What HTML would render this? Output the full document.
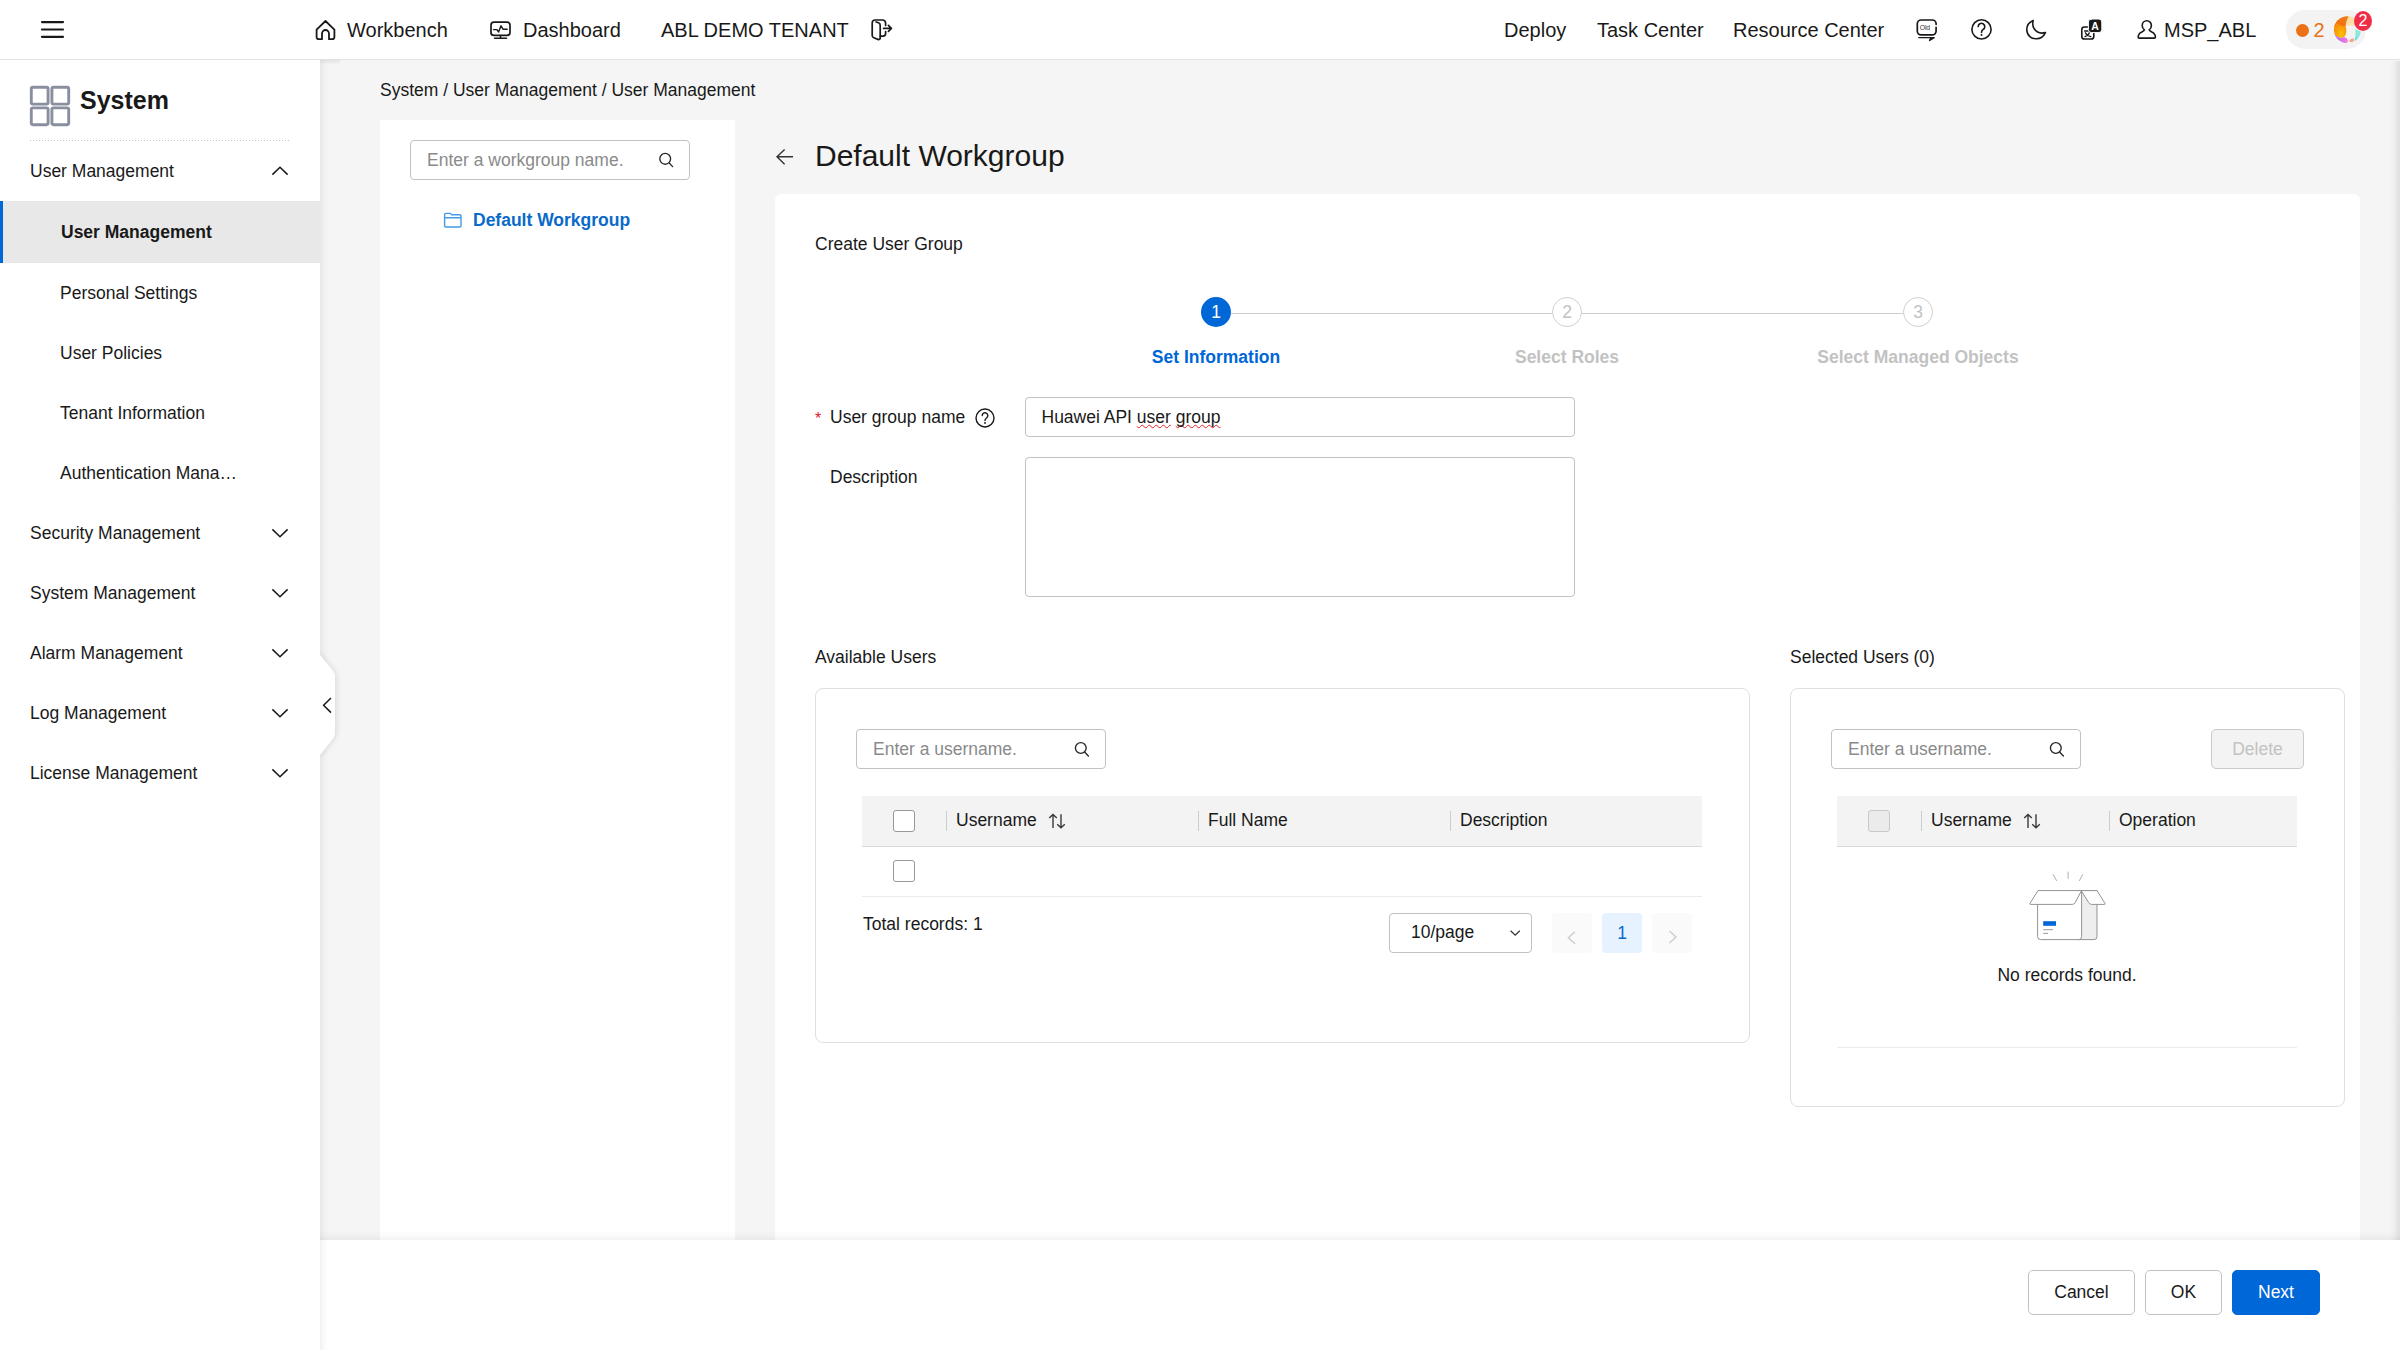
<!DOCTYPE html>
<html lang="en">
<head>
<meta charset="utf-8">
<title>User Management</title>
<style>
*{box-sizing:border-box;margin:0;padding:0}
html,body{width:2400px;height:1350px;overflow:hidden;background:#f5f5f5;}
body{font-family:"Liberation Sans",sans-serif;font-size:17.5px;color:#191919;position:relative;line-height:1;}
.abs{position:absolute}
.t{position:absolute;white-space:nowrap;line-height:1;margin-top:1px}
svg{position:absolute;overflow:visible}
/* header */
#hdr{position:absolute;left:0;top:0;width:2400px;height:60px;background:#fff;border-bottom:1px solid #e2e2e2;z-index:5}
#hdr .t{font-size:20px;top:20px;color:#191919;margin-top:0}
/* sidebar */
#side{position:absolute;left:0;top:60px;width:320px;height:1290px;background:#fff;z-index:3;}
#side .m{margin-top:1px;position:absolute;left:30px;font-size:17.5px;white-space:nowrap}
#side .s{margin-top:1px;position:absolute;left:60px;font-size:17.5px;white-space:nowrap}
.inp{position:absolute;border:1px solid #c2c2c2;border-radius:4px;background:#fff;height:40px}
.ph{position:absolute;left:16px;top:11px;font-size:17.5px;color:#8a8a8a;white-space:nowrap}
.box{position:absolute;border:1px solid #dfdfdf;border-radius:8px;background:#fff}
.th{position:absolute;background:#f3f3f3;height:51px;border-bottom:1px solid #d9d9d9}
.sep{position:absolute;width:1px;height:20px;top:15px;background:#cdcdcd}
.cb{position:absolute;width:22px;height:22px;border:1px solid #999;border-radius:3px;background:#fff}
u.sq{text-decoration:underline wavy #e8202a;text-decoration-thickness:1px;text-underline-offset:0.5px;text-decoration-skip-ink:none}
.btn{position:absolute;height:45px;border:1px solid #c2c2c2;border-radius:5px;background:#fff;font-size:17.5px;text-align:center;line-height:42px;color:#191919}
</style>
</head>
<body>

<!-- ================= HEADER ================= -->
<div id="hdr">
  <svg style="left:40px;top:20px" width="24" height="20" viewBox="0 0 24 20" fill="none" stroke="#191919" stroke-width="2.2" stroke-linecap="round"><path d="M2 2.1H23M2 9.5H23M2 16.8H23"/></svg>
  <span class="t" style="left:347px">Workbench</span>
  <span class="t" style="left:523px">Dashboard</span>
  <span class="t" style="left:661px">ABL DEMO TENANT</span>
  <span class="t" style="left:1504px">Deploy</span>
  <span class="t" style="left:1597px">Task Center</span>
  <span class="t" style="left:1733px">Resource Center</span>
  <span class="t" style="left:2164px">MSP_ABL</span>
  <span class="t" style="left:1919.8px;top:25.1px;font-size:6.8px;color:#333;letter-spacing:-0.15px">Old</span>
  <div class="abs" style="left:2286px;top:10px;width:80px;height:39px;border-radius:20px;background:#f3f3f3"></div>
  <div class="abs" style="left:2296px;top:24px;width:13px;height:13px;border-radius:50%;background:#ec7016"></div>
  <span class="t" style="left:2313.5px;top:20px;color:#ec7016">2</span>
  <svg style="left:2334px;top:15.7px" width="27" height="27.4" viewBox="0 0 27 27.4">
    <defs>
      <clipPath id="lc"><circle cx="13.4" cy="13.7" r="13.5"/></clipPath>
      <radialGradient id="g1" cx="0.62" cy="0.78" r="0.75"><stop offset="0" stop-color="#ffc400"/><stop offset="0.45" stop-color="#fba007"/><stop offset="1" stop-color="#f5830c"/></radialGradient>
      <linearGradient id="g0" x1="0" y1="1" x2="1" y2="0"><stop offset="0" stop-color="#f7650b"/><stop offset="1" stop-color="#e9831f"/></linearGradient>
      <linearGradient id="g2" x1="0" y1="0" x2="0" y2="1"><stop offset="0" stop-color="#ffdc9c"/><stop offset="1" stop-color="#ffe2b0"/></linearGradient>
      <linearGradient id="g3" x1="0" y1="0" x2="1" y2="0.4"><stop offset="0" stop-color="#a35cf2"/><stop offset="1" stop-color="#ea7be2"/></linearGradient>
      <linearGradient id="g4" x1="0" y1="0" x2="0" y2="1"><stop offset="0" stop-color="#86f0cf"/><stop offset="0.5" stop-color="#8ee4df"/><stop offset="1" stop-color="#3fd2f0"/></linearGradient>
    </defs>
    <g clip-path="url(#lc)">
      <path d="M12 -1 H21 V9.8 C18 9.2 14.5 9.4 11.7 10.2 Z" fill="url(#g2)"/>
      <path d="M0.2 17 C2 21 6 22.5 9.8 21.3 C12 21.3 13.8 22.6 13.8 24.6 C13.8 26.4 12.8 27.4 11 27.4 H0 Z" fill="url(#g3)"/>
      <path d="M-1 4 H6 C10 9 12.3 10.4 12.3 13 C12.6 17 11.6 20 9.8 21.3 C6 22.6 1.5 21 0 16.6 Z" fill="url(#g1)"/>
      <path d="M-1 -1 H15.2 C13 3 11.8 6.5 11.7 10.3 C8.5 10.6 5.5 9.4 3.4 6.6 L-1 12 Z" fill="url(#g0)"/>
      <path d="M21 13.2 C23 13.6 25 14.6 27.2 16 V22 L20.4 25.6 C21.6 22 21.8 17.6 21 13.2 Z" fill="url(#g4)"/>
      <path d="M15.3 24.6 C16.4 22.8 18.4 22.2 20.2 22.6 C20 24.6 19.4 25.8 18 26.2 C16.6 26.4 15.4 25.8 15.3 24.6 Z" fill="#ff9f7f"/>
    </g>
  </svg>
  <div class="abs" style="left:2354px;top:10.8px;width:18px;height:20px;border-radius:9px/10px;background:#f02d47;color:#fff;font-size:16px;text-align:center;line-height:19px">2</div>
</div>

<!-- ================= SIDEBAR ================= -->
<div id="side">
  <span class="t" style="left:80px;top:27px;font-size:25px;font-weight:bold">System</span>
  <div class="abs" style="left:30px;top:79.8px;width:260px;height:1.5px;background:repeating-linear-gradient(to right,#c4c4c4 0,#c4c4c4 1.5px,transparent 1.5px,transparent 3px)"></div>
  <span class="m" style="top:102px">User Management</span>
  <div class="abs" style="left:0;top:141px;width:320px;height:62px;background:#e8e8e8;border-left:3px solid #0067d6"></div>
  <span class="s" style="top:163px;left:61px;font-weight:bold">User Management</span>
  <span class="s" style="top:224px">Personal Settings</span>
  <span class="s" style="top:284px">User Policies</span>
  <span class="s" style="top:344px">Tenant Information</span>
  <span class="s" style="top:404px">Authentication Mana…</span>
  <span class="m" style="top:464px">Security Management</span>
  <span class="m" style="top:524px">System Management</span>
  <span class="m" style="top:584px">Alarm Management</span>
  <span class="m" style="top:644px">Log Management</span>
  <span class="m" style="top:704px">License Management</span>
</div>

<div class="abs" style="left:320px;top:60px;width:9px;height:1290px;z-index:3;background:linear-gradient(to right,rgba(0,0,0,.056),rgba(0,0,0,.032) 28%,rgba(0,0,0,.014) 55%,rgba(0,0,0,0))"></div>
  <svg style="left:320px;top:650px;z-index:4;overflow:hidden" width="24" height="112" viewBox="0 0 24 112"><defs><filter id="hs" x="-50%" y="-10%" width="250%" height="120%"><feDropShadow dx="2" dy="0" stdDeviation="2.5" flood-color="#000" flood-opacity="0.10"/></filter></defs><path d="M-4 4 L0 5 L12.5 20.5 Q15 23.5 15 27 V82 Q15 86 12.5 89 L0 105 L-4 106 Z" fill="#fff" filter="url(#hs)"/></svg>
<div class="abs" style="left:320px;top:60px;width:20px;height:5px;z-index:3;background:linear-gradient(to bottom,rgba(0,0,0,.075),rgba(0,0,0,.03) 50%,rgba(0,0,0,0))"></div>
<!-- ================= MAIN ================= -->
<span class="t" style="left:380px;top:81px">System / User Management / User Management</span>

<!-- left workgroup panel -->
<div class="abs" style="left:380px;top:120px;width:355px;height:1120px;background:#fff"></div>
<div class="inp" style="left:410px;top:140px;width:280px"><span class="ph">Enter a workgroup name.</span></div>
<span class="t" style="left:473px;top:211px;font-weight:bold;color:#0a6ac9">Default Workgroup</span>

<!-- title -->
<span class="t" style="left:815px;top:140px;font-size:30px">Default Workgroup</span>

<!-- card -->
<div class="abs" style="left:775px;top:194px;width:1585px;height:1046px;background:#fff;border-radius:6px 6px 0 0"></div>
<span class="t" style="left:815px;top:235px">Create User Group</span>


<!-- steps -->
<div class="abs" style="left:1231px;top:312.5px;width:321px;height:1.5px;background:#cecece"></div>
<div class="abs" style="left:1582px;top:312.5px;width:321px;height:1.5px;background:#cecece"></div>
<div class="abs" style="left:1201px;top:297px;width:30px;height:30px;border-radius:50%;background:#0067d6;color:#fff;text-align:center;line-height:30px;font-size:17.5px">1</div>
<div class="abs" style="left:1552px;top:297px;width:30px;height:30px;border-radius:50%;background:#fff;border:1px solid #d0d0d0;color:#c2c2c2;text-align:center;line-height:28px;font-size:17.5px">2</div>
<div class="abs" style="left:1903px;top:297px;width:30px;height:30px;border-radius:50%;background:#fff;border:1px solid #d0d0d0;color:#c2c2c2;text-align:center;line-height:28px;font-size:17.5px">3</div>
<span class="t" style="left:1016px;top:348px;width:400px;text-align:center;font-weight:bold;color:#0067d6">Set Information</span>
<span class="t" style="left:1367px;top:348px;width:400px;text-align:center;font-weight:bold;color:#c2c2c2">Select Roles</span>
<span class="t" style="left:1718px;top:348px;width:400px;text-align:center;font-weight:bold;color:#c2c2c2">Select Managed Objects</span>

<!-- form -->
<span class="t" style="left:815px;top:410px;color:#e02128;font-size:16px">*</span>
<span class="t" style="left:830px;top:408px">User group name</span>
<div class="inp" style="left:1025px;top:397px;width:550px"><span class="ph" style="color:#191919;left:15.5px">Huawei API <u class="sq">user</u> <u class="sq">group</u></span></div>
<span class="t" style="left:830px;top:468px">Description</span>
<div class="inp" style="left:1025px;top:457px;width:550px;height:140px"></div>

<!-- available users -->
<span class="t" style="left:815px;top:648px">Available Users</span>
<div class="box" style="left:815px;top:688px;width:935px;height:355px"></div>
<div class="inp" style="left:856px;top:729px;width:250px"><span class="ph">Enter a username.</span></div>
<div class="th" style="left:862px;top:796px;width:840px">
  <div class="cb" style="left:31px;top:14px"></div>
  <div class="sep" style="left:84px"></div><div class="sep" style="left:336px"></div><div class="sep" style="left:588px"></div>
  <span class="t" style="left:94px;top:15px">Username</span>
  <span class="t" style="left:346px;top:15px">Full Name</span>
  <span class="t" style="left:598px;top:15px">Description</span>
</div>
<div class="abs" style="left:862px;top:846px;width:840px;height:51px;border-bottom:1px solid #ebebeb"><div class="cb" style="left:31px;top:14px"></div></div>
<span class="t" style="left:863px;top:915px">Total records: 1</span>
<div class="inp" style="left:1389px;top:913px;width:143px"><span class="ph" style="left:21px;top:10px;color:#191919">10/page</span></div>
<div class="abs" style="left:1552px;top:913px;width:40px;height:40px;background:#fafafa;border-radius:4px"></div>
<div class="abs" style="left:1602px;top:913px;width:40px;height:40px;background:#e6f2ff;border-radius:4px;color:#0a6ac9;text-align:center;line-height:40px;font-size:17.5px">1</div>
<div class="abs" style="left:1652px;top:913px;width:40px;height:40px;background:#fafafa;border-radius:4px"></div>

<!-- selected users -->
<span class="t" style="left:1790px;top:648px">Selected Users (0)</span>
<div class="box" style="left:1790px;top:688px;width:555px;height:419px"></div>
<div class="inp" style="left:1831px;top:729px;width:250px"><span class="ph">Enter a username.</span></div>
<div class="abs" style="left:2211px;top:729px;width:93px;height:40px;border:1px solid #cacaca;border-radius:5px;background:#f3f3f3;color:#c2c2c2;text-align:center;line-height:38px;font-size:17.5px">Delete</div>
<div class="th" style="left:1837px;top:796px;width:460px">
  <div class="cb" style="left:31px;top:14px;background:#ebebeb;border-color:#c9c9c9"></div>
  <div class="sep" style="left:84px"></div><div class="sep" style="left:272px"></div>
  <span class="t" style="left:94px;top:15px">Username</span>
  <span class="t" style="left:282px;top:15px">Operation</span>
</div>
<span class="t" style="left:1837px;top:966px;width:460px;text-align:center">No records found.</span>
<div class="abs" style="left:1837px;top:1047px;width:460px;height:1px;background:#ebebeb"></div>

<!-- footer -->
<div class="abs" style="left:320px;top:1240px;width:2080px;height:110px;background:#fff;z-index:2"></div>
<div class="abs" style="left:320px;top:1230px;width:2080px;height:10px;z-index:2;background:linear-gradient(to bottom,rgba(0,0,0,0),rgba(0,0,0,.012) 40%,rgba(0,0,0,.028) 70%,rgba(0,0,0,.052))"></div>
<div class="abs" style="left:2389px;top:61px;width:11px;height:1179px;z-index:1;background:linear-gradient(to right,rgba(0,0,0,0),rgba(0,0,0,.02) 40%,rgba(0,0,0,.09))"></div>
<div class="btn" style="left:2028px;top:1270px;width:107px;z-index:3">Cancel</div>
<div class="btn" style="left:2145px;top:1270px;width:77px;z-index:3">OK</div>
<div class="btn" style="left:2232px;top:1270px;width:88px;z-index:3;background:#0067d9;border-color:#0067d9;color:#fff">Next</div>


<!-- ================= ICON OVERLAY (page coordinates) ================= -->
<svg id="ico" style="left:0;top:0;z-index:9" width="2400" height="1350" viewBox="0 0 2400 1350" fill="none" stroke="#191919" stroke-width="1.6" stroke-linecap="round" stroke-linejoin="round">
  <!-- home -->
  <path d="M325.5 21 L316.6 29.6 V37 a2.2 2.2 0 0 0 2.2 2.2 H322 V33.5 a3.5 3.5 0 0 1 7 0 V39.2 H332.2 a2.2 2.2 0 0 0 2.2 -2.2 V29.6 Z" stroke-width="1.8"/>
  <!-- dashboard -->
  <rect x="491" y="22.2" width="19" height="13.2" rx="3" stroke-width="1.7"/>
  <path d="M494.5 38.2 H506.5 M500.5 35.6 V38" stroke-width="1.5"/>
  <path d="M493.5 29.6 H497 L498.6 32 L501 25.8 L503 29.2 H507.2" stroke-width="1.4"/>
  <!-- exit -->
  <path d="M885.6 25.4 V23 a3 3 0 0 0 -3 -3 H875.2 a3 3 0 0 0 -3 3 V35.6 a2.4 2.4 0 0 0 1.6 2.2 L878 39.4 a1.6 1.6 0 0 0 2.2 -1.5 V25.2 a2.6 2.6 0 0 0 -1.6 -2.4 L876 22" stroke-width="1.7"/>
  <path d="M880.4 36.2 H883 a2.6 2.6 0 0 0 2.6 -2.6 V31.6" stroke-width="1.7"/>
  <path d="M883.6 28.4 H891.4 M888.4 25.4 L891.4 28.4 L888.4 31.4" stroke-width="1.7"/>
  <!-- old-version -->
  <path d="M1936.1 24.3 V23.8 a3.8 3.8 0 0 0 -3.8 -3.8 H1921.1 a3.8 3.8 0 0 0 -3.8 3.8 V31.1 a3.8 3.8 0 0 0 3.8 3.8 H1932.3 a3.8 3.8 0 0 0 3.8 -3.8 V27.4" stroke-width="1.7"/>
  <path d="M1918.8 37.6 H1934.2 L1929.6 40.4 L1931 37.8" stroke-width="1.4" fill="#191919"/>
  <!-- help -->
  <circle cx="1981.5" cy="29.4" r="9.6" stroke-width="1.6"/>
  <path d="M1978.2 26.6 a3.3 3.3 0 1 1 5 2.8 c-1.2 0.8 -1.7 1.5 -1.7 3" stroke-width="1.6"/>
  <circle cx="1981.5" cy="35" r="1" fill="#191919" stroke="none"/>
  <!-- moon -->
  <path d="M2033.2 20.4 C2028.6 22.4 2026.6 26.6 2026.8 30 C2027 35.6 2031.6 39 2036.4 38.8 C2040.6 38.6 2043.8 36.2 2045.4 32.6 C2040.8 33.8 2036.6 32.4 2034.2 28.8 C2032.6 26.2 2032.4 23.2 2033.2 20.4 Z" stroke-width="1.6"/>
  <!-- translate -->
  <rect x="2081.8" y="27" width="12" height="12" rx="2.6" stroke-width="1.6"/>
  <path d="M2084.6 31 H2090.6 M2085 36.6 C2087.6 35.6 2089.4 33.6 2090 31 M2085.4 32.8 C2086.4 34.8 2088.2 36 2090.8 36.6" stroke-width="1.3"/>
  <rect x="2088.4" y="19" width="13.4" height="13.6" rx="3" fill="#191919" stroke="#fff" stroke-width="1"/>
  <text x="2095.1" y="29.6" text-anchor="middle" font-family="'Liberation Sans',sans-serif" font-size="10.5" font-weight="bold" fill="#fff" stroke="none">A</text>
  <!-- user -->
  <path d="M2146.8 20.8 a4.6 4.6 0 0 1 4.6 4.6 c0 2 -1 3.5 -2.2 4.4 c0.3 1.2 1.4 1.6 2.6 2.2 c2.2 1 3.6 2.6 3.6 5.2 a0.9 0.9 0 0 1 -0.9 0.9 H2139.1 a0.9 0.9 0 0 1 -0.9 -0.9 c0 -2.6 1.4 -4.2 3.6 -5.2 c1.2 -0.6 2.3 -1 2.6 -2.2 c-1.2 -0.9 -2.2 -2.4 -2.2 -4.4 a4.6 4.6 0 0 1 4.6 -4.6 Z" stroke-width="1.6"/>

  <!-- sidebar: system icon -->
  <g stroke="#8a8fa0" stroke-width="2.9">
    <rect x="31.3" y="87.3" width="16.8" height="16.8" rx="1.6"/>
    <rect x="51.9" y="87.3" width="16.8" height="16.8" rx="1.6"/>
    <rect x="31.3" y="107.9" width="16.8" height="16.8" rx="1.6"/>
    <rect x="51.9" y="107.9" width="16.8" height="16.8" rx="1.6"/>
  </g>
  <!-- sidebar chevrons -->
  <g stroke-width="1.5" stroke-linecap="butt" stroke-linejoin="miter">
    <path d="M272.4 174.6 L280 167.2 L287.6 174.6"/>
    <path d="M272.4 529.4 L280 536.8 L287.6 529.4"/>
    <path d="M272.4 589.4 L280 596.8 L287.6 589.4"/>
    <path d="M272.4 649.4 L280 656.8 L287.6 649.4"/>
    <path d="M272.4 709.4 L280 716.8 L287.6 709.4"/>
    <path d="M272.4 769.4 L280 776.8 L287.6 769.4"/>
    <path d="M331 698 L323.6 705.3 L331 712.6"/>
  </g>

  <!-- search icons -->
  <g stroke-width="1.35" stroke="#262626">
    <circle cx="665.2" cy="158.8" r="5.4"/><path d="M669.2 163 L672.6 166.6"/>
    <circle cx="1080.8" cy="748" r="5.4"/><path d="M1084.8 752.2 L1088.4 756"/>
    <circle cx="2055.8" cy="748" r="5.4"/><path d="M2059.8 752.2 L2063.4 756"/>
  </g>
  <!-- folder -->
  <path d="M444.6 226 V214.4 a1 1 0 0 1 1 -1 H450.4 L451.6 214.8 H460 a1 1 0 0 1 1 1 V226 a1 1 0 0 1 -1 1 H445.6 a1 1 0 0 1 -1 -1 Z M444.6 217.8 H461" stroke="#459be8" stroke-width="1.4"/>
  <!-- back arrow -->
  <path d="M777 156.8 H793 M784.6 149.4 L777 156.8 L784.6 164.2" stroke="#333" stroke-width="1.4" stroke-linecap="butt" stroke-linejoin="miter"/>
  <!-- form help -->
  <circle cx="985" cy="418" r="9" stroke-width="1.4"/>
  <path d="M982.2 415.6 a2.8 2.8 0 1 1 4.3 2.4 c-1 0.7 -1.5 1.3 -1.5 2.5" stroke-width="1.4"/>
  <circle cx="985" cy="423" r="0.9" fill="#191919" stroke="none"/>
  <!-- sort icons -->
  <g stroke="#3a3a3a" stroke-width="1.4" stroke-linecap="butt" stroke-linejoin="miter">
    <path d="M1053 828 V814.6 M1049.2 818 L1053 814.4 L1056.8 818"/>
    <path d="M1061 814.2 V827.6 M1057.2 824.2 L1061 827.8 L1064.8 824.2"/>
    <path d="M2028 828 V814.6 M2024.2 818 L2028 814.4 L2031.8 818"/>
    <path d="M2036 814.2 V827.6 M2032.2 824.2 L2036 827.8 L2039.8 824.2"/>
  </g>
  <!-- select chevron & pager chevrons -->
  <path d="M1510.6 930.8 L1515.2 935.2 L1519.8 930.8" stroke="#333" stroke-width="1.25" stroke-linecap="butt" stroke-linejoin="miter"/>
  <path d="M1575 931.8 L1568.4 937.8 L1575 943.8" stroke="#cfcfcf" stroke-width="1.5" stroke-linecap="butt" stroke-linejoin="miter"/>
  <path d="M1669.4 931 L1676 937 L1669.4 943" stroke="#cfcfcf" stroke-width="1.5" stroke-linecap="butt" stroke-linejoin="miter"/>

  <!-- empty box -->
  <g stroke="#939393" stroke-width="1">
    <path d="M2081.5 890.6 H2097 V936.6 a3 3 0 0 1 -3 3 H2078" fill="#eeeeee"/>
    <path d="M2037.6 904.4 V936.6 a3 3 0 0 0 3 3 H2078.6 a3 3 0 0 0 3 -3 V890.6" fill="#fff"/>
    <path d="M2038.4 890.6 H2081.6 L2075 902.8 a3 3 0 0 1 -2.6 1.6 H2030.4 a0.6 0.6 0 0 1 -0.5 -0.9 Z" fill="#fff"/>
    <path d="M2081.6 890.6 H2097 L2105 903.5 a0.6 0.6 0 0 1 -0.5 0.9 H2091.4 a3 3 0 0 1 -2.6 -1.6 Z" fill="#fff"/>
    <path d="M2043.2 929.7 H2053 M2043.2 933.4 H2048" stroke="#999" stroke-width="1" stroke-linecap="butt"/>
    <path d="M2053.2 874.6 L2056.6 880.6 M2068.1 872 V878.4 M2082.6 874.6 L2079.4 880.6" stroke="#b0b0b0" stroke-width="1"/>
  </g>
  <rect x="2043.2" y="921.2" width="12.8" height="4.6" fill="#0067d9" stroke="none"/>
</svg>

</body>
</html>
